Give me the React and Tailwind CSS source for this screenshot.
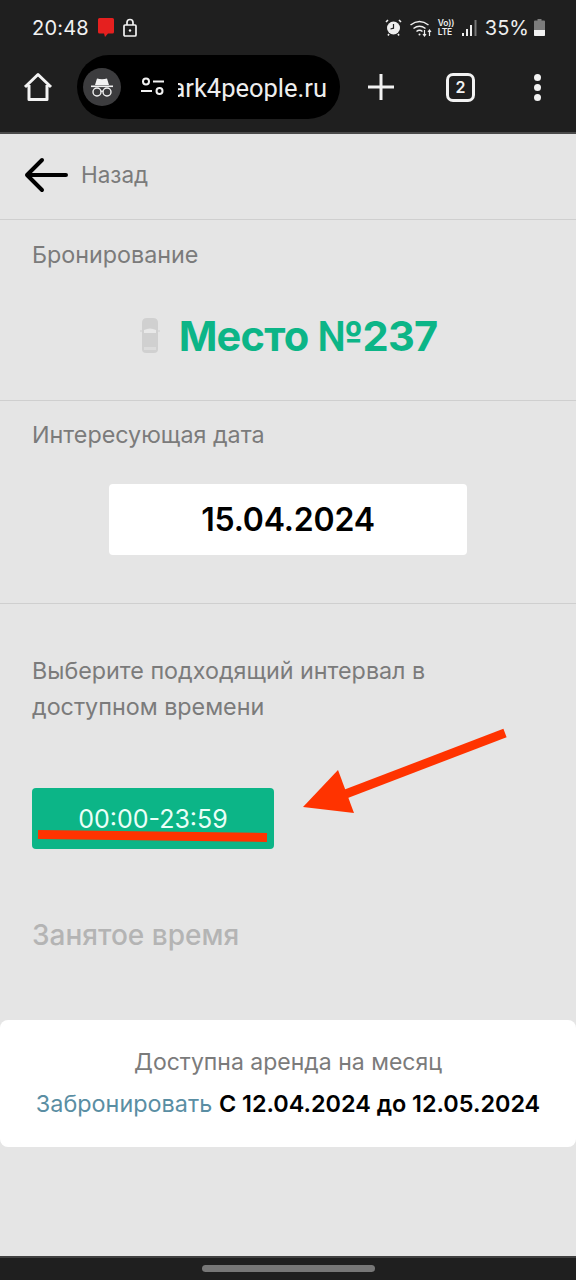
const Dark = () => (
  <div className="bg-[#1f1f1f] h-[134px] flex flex-col border-b-2 border-[#4a4a4a] text-white shrink-0">
    <div className="h-[54px] flex items-center pl-[32px] pr-[31px] justify-between pt-[1px]">
      <div className="flex items-center gap-[9px]">
        <span className="text-[20px] leading-none text-[#f2f2f2] tracking-[0.2px]">20:48</span>
        <svg width="16" height="20" viewBox="0 0 16 20"><path d="M0 1.500Q0 0 1.500 0H14.500Q16 0 16 1.500V14Q16 15.500 14.500 15.500H10L7 19L6 15.500H1.500Q0 15.500 0 14Z" fill="#e5201f" /></svg>
        <svg width="14" height="19" viewBox="0 0 14 19" fill="none" stroke="#f2f2f2" strokeWidth="1.700"><rect x="1" y="7" width="12" height="11" rx="1" /><path d="M4 7V4.500a3 3 0 0 1 6 0V7" /><circle cx="7" cy="12.500" r="1.200" fill="#f2f2f2" stroke="none" /></svg>
      </div>
      <div className="flex items-center">
        <svg width="17" height="17" viewBox="0 0 17 17" className="mr-[7px]"><path d="M3 1 1 3M14 1l2 2M4 15l-1 1.500M13 15l1 1.500" stroke="#eee" strokeWidth="1.600" fill="none" /><circle cx="8.500" cy="9" r="6.500" fill="#eee" /><path d="M8.500 5v4.200l-3 .8" stroke="#1f1f1f" strokeWidth="1.200" fill="none" /></svg>
        <svg width="24" height="18" viewBox="0 0 23 18" fill="none" stroke="#eee" strokeWidth="1.500" className="mr-[5px]"><path d="M1 6Q10-1 19 6" /><path d="M4 9.500Q10 5 16 9.500" /><path d="M7 12.500Q10 10 13 12.500" /><circle cx="10" cy="15.500" r="1" fill="#eee" stroke="none" /><path d="M15 11v6M13.500 15l1.500 2 1.500-2M20 17v-6M18.500 13l1.500-2 1.500 2" strokeWidth="1.200" /></svg>
        <div className="flex flex-col text-[8.5px] leading-[8.5px] font-semibold text-[#eee] w-[17px] mr-[7px] tracking-[-0.2px]"><span>Vo))</span><span>LTE</span></div>
        <svg width="15" height="16" viewBox="0 0 15 16" className="mr-[8px]"><rect x="0" y="13" width="2" height="3" fill="#eee" /><rect x="4" y="9" width="2" height="7" fill="#eee" /><rect x="8" y="5" width="2" height="11" fill="#eee" /><rect x="12.500" y="0" width="2" height="16" fill="#777" /></svg>
        <span className="text-[20px] leading-none text-[#eee] mr-[5px]">35%</span>
        <svg width="11" height="17" viewBox="0 0 11 17"><path d="M3.500 0h4v1.500H10a1 1 0 0 1 1 1V16a1 1 0 0 1-1 1H1a1 1 0 0 1-1-1V2.500a1 1 0 0 1 1-1h2.500Z" fill="#7c7c7c" /><path d="M0 11h11v5a1 1 0 0 1-1 1H1a1 1 0 0 1-1-1Z" fill="#f2f2f2" /></svg>
      </div>
    </div>
    <div className="flex items-center h-[66px]">
      <svg width="30" height="30" viewBox="0 0 30 30" fill="none" stroke="#f2f2f2" strokeWidth="3" strokeLinejoin="round" className="ml-[23px] mr-[24px]"><path d="M2 15 15 2.500 28 15M6 13v14.500h18V13" /></svg>
      <div className="w-[263px] h-[64px] bg-black rounded-full flex items-center pl-[6px] overflow-hidden">
        <div className="w-[38px] h-[38px] rounded-full bg-[#3c3c3e] flex items-center justify-center shrink-0">
          <svg width="24" height="20" viewBox="0 0 24 20"><path d="M5 8 7 1.500Q12 3 17 1.500L19 8Z" fill="#f2f2f2" /><rect x="1" y="8.500" width="22" height="1.600" fill="#f2f2f2" /><circle cx="7" cy="15" r="4" fill="none" stroke="#f2f2f2" strokeWidth="1.400" /><circle cx="17" cy="15" r="4" fill="none" stroke="#f2f2f2" strokeWidth="1.400" /><path d="M11 14.500q1-.8 2 0" stroke="#f2f2f2" strokeWidth="1.200" fill="none" /></svg>
        </div>
        <svg width="24" height="20" viewBox="0 0 24 20" fill="none" stroke="#f2f2f2" strokeWidth="2" className="ml-[20px] shrink-0"><circle cx="5" cy="4.500" r="3" /><path d="M12 4.500h11M0 14h11" /><circle cx="18.500" cy="14" r="3" /></svg>
        <div className="w-[149px] overflow-hidden flex justify-end ml-[13px] shrink-0 pt-[3px]">
          <span className="font-['Roboto',sans-serif] text-[25.5px] leading-none text-[#eeeeee] whitespace-nowrap">park4people.ru</span>
        </div>
      </div>
      <svg width="26" height="26" viewBox="0 0 26 26" stroke="#f2f2f2" strokeWidth="3" className="ml-[28px]"><path d="M13 0v26M0 13h26" /></svg>
      <div className="ml-[52px] w-[29px] h-[29px] border-[3px] border-[#f2f2f2] rounded-[7px] flex items-center justify-center text-[16px] font-semibold leading-none text-[#f2f2f2]">2</div>
      <div className="ml-[59px] flex flex-col gap-[3px]">
        <div className="w-[7px] h-[7px] rounded-full bg-[#f2f2f2]" />
        <div className="w-[7px] h-[7px] rounded-full bg-[#f2f2f2]" />
        <div className="w-[7px] h-[7px] rounded-full bg-[#f2f2f2]" />
      </div>
    </div>
  </div>
);

export default function App() {
  return (
    <div className="relative w-[576px] h-[1280px] bg-[#e5e5e5] flex flex-col overflow-hidden font-['Inter',sans-serif]">
      <Dark />
      <div className="h-[86px] flex items-center pl-[24px] border-b border-[#cfcfcf] shrink-0 pb-[3px]">
        <svg width="44" height="36" viewBox="0 0 44 36" fill="none" stroke="#000" strokeWidth="4" strokeLinecap="round" strokeLinejoin="round"><path d="M42 18H3M18 3 3 18l15 15" /></svg>
        <span className="ml-[13px] text-[22.5px] leading-none text-[#7b7b7b]">Назад</span>
      </div>
      <div className="h-[181px] border-b border-[#cfcfcf] px-[32px] pt-[21px] shrink-0">
        <div className="text-[23.3px] leading-[28px] text-[#7b7b7b]">Бронирование</div>
        <div className="flex justify-center items-center mt-[45px]">
          <svg width="22" height="38" viewBox="0 0 22 38" className="mr-[18px]"><path d="M3 6Q3 1 8 1H14Q19 1 19 6V32Q19 36 15 36H7Q3 36 3 32Z" fill="#d0d0d0" /><path d="M5 13Q11 10 17 13V16H5Z" fill="#e8e8e8" /><path d="M5 30H17V33H5Z" fill="#dcdcdc" /><rect x="1" y="13" width="2" height="2" fill="#dadada" /><rect x="19" y="13" width="2" height="2" fill="#dadada" /></svg>
          <span className="text-[41.6px] leading-[44px] font-bold text-[#0cb587] tracking-[-0.8px]">Место №237</span>
        </div>
      </div>
      <div className="h-[203px] border-b border-[#cfcfcf] px-[32px] pt-[20px] shrink-0">
        <div className="text-[23.3px] leading-[28px] text-[#7b7b7b]">Интересующая дата</div>
        <div className="mt-[35px] mx-auto w-[358px] h-[71px] bg-white rounded-[4px] flex items-center justify-center text-[32px] font-semibold text-black tracking-[-0.2px]">15.04.2024</div>
      </div>
      <div className="px-[32px] pt-[49px]">
        <div className="text-[23.3px] leading-[36px] text-[#7b7b7b]">Выберите подходящий интервал в<br />доступном времени</div>
        <div className="mt-[63px] w-[242px] h-[61px] bg-[#0cb587] rounded-[4px] flex justify-center pt-[16px] text-[25px] leading-[30px] text-[#eafff8]">00:00-23:59</div>
        <div className="mt-[68px] text-[28px] leading-[36px] font-medium text-[#b4b4b4]">Занятое время</div>
      </div>
      <div className="mt-[67px] h-[127px] bg-white rounded-[8px] flex flex-col items-center pt-[25px] shrink-0">
        <div className="text-[23px] leading-[34px] text-[#7b7b7b]">Доступна аренда на месяц</div>
        <div className="mt-[8px] text-[23.4px] leading-[34px] whitespace-nowrap"><span className="text-[#5a8ea3]">Забронировать</span> <span className="font-semibold text-black">С 12.04.2024 до 12.05.2024</span></div>
      </div>
      <div className="absolute left-0 right-0 bottom-0 h-[24px] bg-[#1f1f1f] border-t-2 border-[#404040] flex justify-center pt-[7px]">
        <div className="w-[173px] h-[7px] rounded-full bg-[#777777]" />
      </div>
      <svg className="absolute left-0 top-0 pointer-events-none" width="576" height="900" viewBox="0 0 576 900">
        <path d="M38 834.500 L267 837.500" stroke="#ff3300" strokeWidth="9" />
        <path d="M505 733 L343 795" stroke="#ff3300" strokeWidth="9" />
        <path d="M303 807 L338 770 L354 813 Z" fill="#ff3300" />
      </svg>
    </div>
  );
}
